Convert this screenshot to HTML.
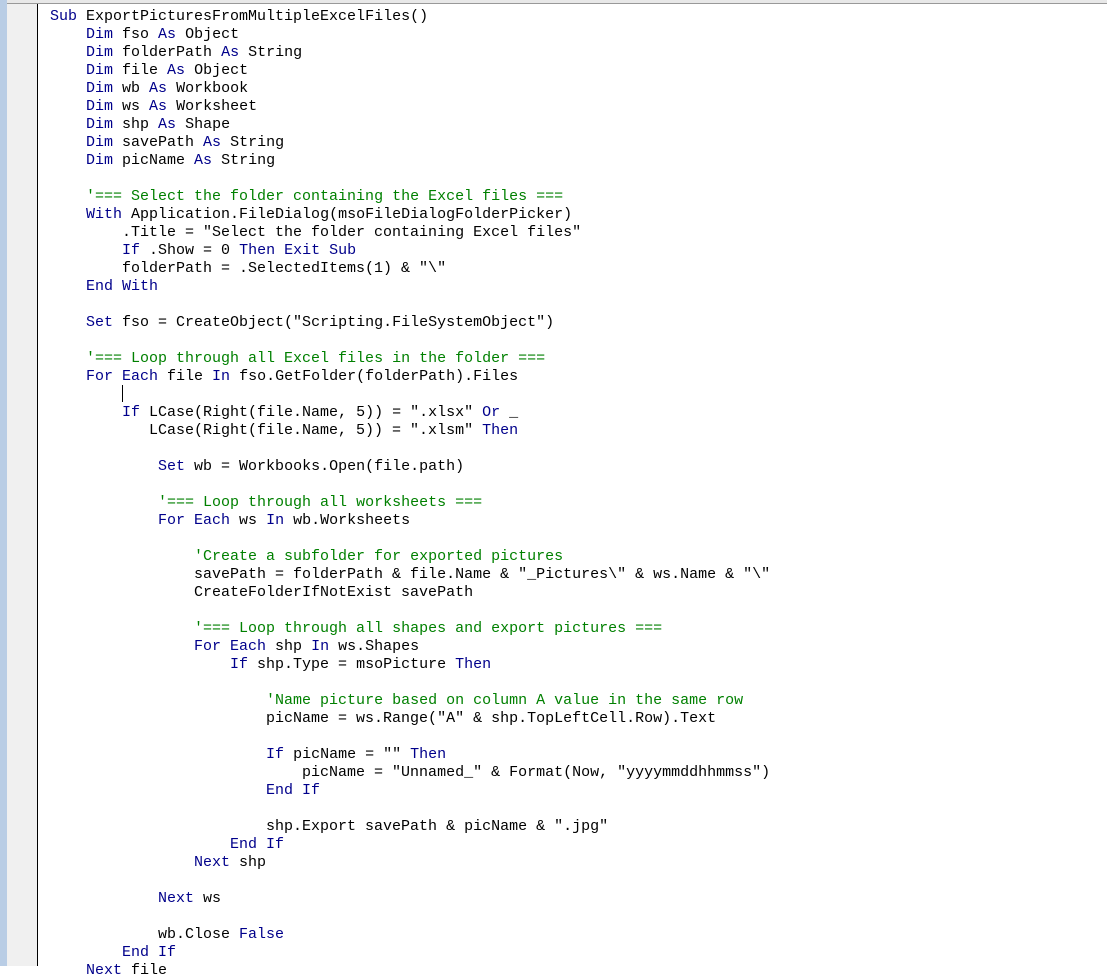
<!DOCTYPE html>
<html><head><meta charset="utf-8"><style>
html,body{margin:0;padding:0;width:1107px;height:966px;overflow:hidden;background:#fff}
.strip{position:absolute;left:0;top:0;width:7px;height:966px;background:#b9cde5}
.mar{position:absolute;left:7px;top:0;width:30px;height:966px;background:#f0f0f0}
.ln{position:absolute;left:37px;top:4px;width:1px;height:962px;background:#000}
.topb{position:absolute;left:7px;top:0;width:1100px;height:3px;background:#e8e8e8;border-bottom:1px solid #999}
pre{position:absolute;left:50px;top:8px;margin:0;font-family:"Liberation Mono",monospace;font-size:15px;line-height:18px;color:#000}
.k{color:#00008b}.c{color:#008000}
.cur{position:absolute;left:122px;top:385px;width:1px;height:17px;background:#000}
</style></head><body>
<div class="strip"></div><div class="mar"></div><div class="topb"></div><div class="ln"></div>
<pre><span class="k">Sub</span> ExportPicturesFromMultipleExcelFiles()
    <span class="k">Dim</span> fso <span class="k">As</span> Object
    <span class="k">Dim</span> folderPath <span class="k">As</span> String
    <span class="k">Dim</span> file <span class="k">As</span> Object
    <span class="k">Dim</span> wb <span class="k">As</span> Workbook
    <span class="k">Dim</span> ws <span class="k">As</span> Worksheet
    <span class="k">Dim</span> shp <span class="k">As</span> Shape
    <span class="k">Dim</span> savePath <span class="k">As</span> String
    <span class="k">Dim</span> picName <span class="k">As</span> String

    <span class="c">'=== Select the folder containing the Excel files ===</span>
    <span class="k">With</span> Application.FileDialog(msoFileDialogFolderPicker)
        .Title = "Select the folder containing Excel files"
        <span class="k">If</span> .Show = 0 <span class="k">Then Exit Sub</span>
        folderPath = .SelectedItems(1) &amp; "\"
    <span class="k">End With</span>

    <span class="k">Set</span> fso = CreateObject("Scripting.FileSystemObject")

    <span class="c">'=== Loop through all Excel files in the folder ===</span>
    <span class="k">For Each</span> file <span class="k">In</span> fso.GetFolder(folderPath).Files

        <span class="k">If</span> LCase(Right(file.Name, 5)) = ".xlsx" <span class="k">Or</span> _
           LCase(Right(file.Name, 5)) = ".xlsm" <span class="k">Then</span>

            <span class="k">Set</span> wb = Workbooks.Open(file.path)

            <span class="c">'=== Loop through all worksheets ===</span>
            <span class="k">For Each</span> ws <span class="k">In</span> wb.Worksheets

                <span class="c">'Create a subfolder for exported pictures</span>
                savePath = folderPath &amp; file.Name &amp; "_Pictures\" &amp; ws.Name &amp; "\"
                CreateFolderIfNotExist savePath

                <span class="c">'=== Loop through all shapes and export pictures ===</span>
                <span class="k">For Each</span> shp <span class="k">In</span> ws.Shapes
                    <span class="k">If</span> shp.Type = msoPicture <span class="k">Then</span>

                        <span class="c">'Name picture based on column A value in the same row</span>
                        picName = ws.Range("A" &amp; shp.TopLeftCell.Row).Text

                        <span class="k">If</span> picName = "" <span class="k">Then</span>
                            picName = "Unnamed_" &amp; Format(Now, "yyyymmddhhmmss")
                        <span class="k">End If</span>

                        shp.Export savePath &amp; picName &amp; ".jpg"
                    <span class="k">End If</span>
                <span class="k">Next</span> shp

            <span class="k">Next</span> ws

            wb.Close <span class="k">False</span>
        <span class="k">End If</span>
    <span class="k">Next</span> file
</pre>
<div class="cur"></div>
</body></html>
